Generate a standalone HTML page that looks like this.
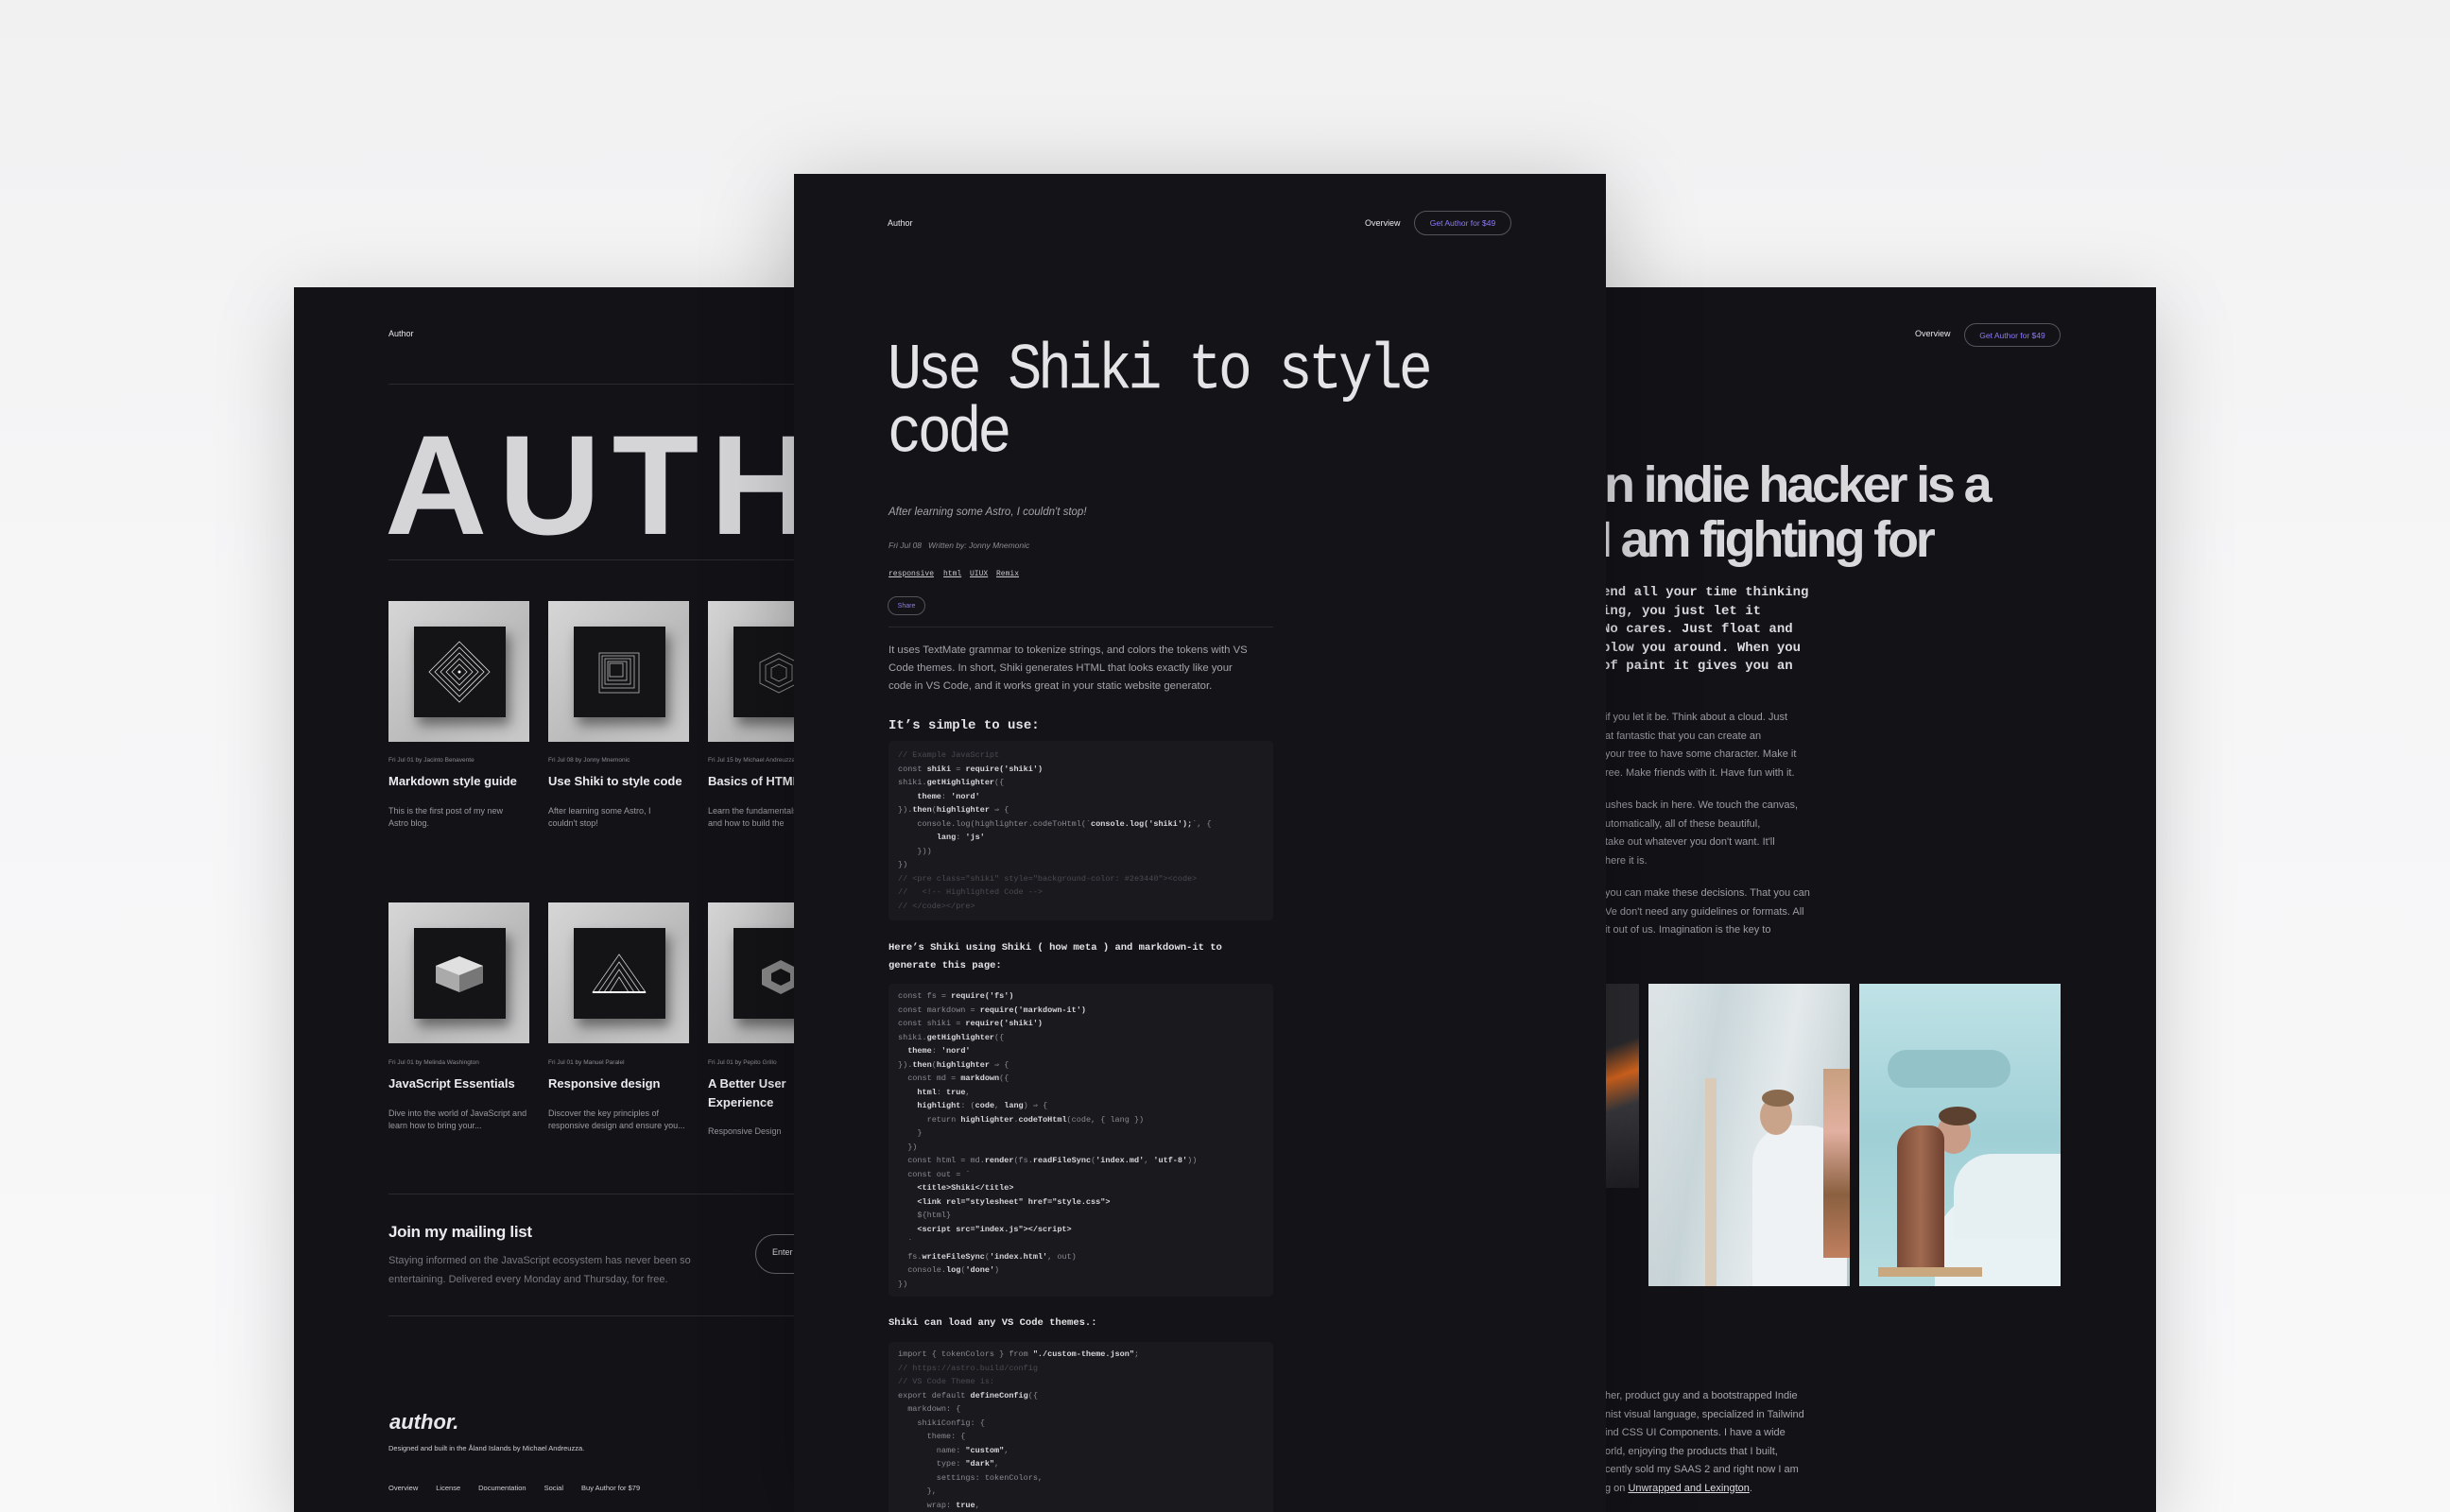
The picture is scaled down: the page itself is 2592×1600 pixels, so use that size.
<!DOCTYPE html>
<html><head><meta charset="utf-8">
<style>
*{margin:0;padding:0;box-sizing:border-box}
html,body{width:2592px;height:1600px;overflow:hidden}
body{background:linear-gradient(#f1f1f2,#f6f6f7 40%,#f8f8f9);font-family:"Liberation Sans",sans-serif;position:relative}
.p{position:absolute;background:#131217;overflow:hidden;box-shadow:0 20px 80px rgba(0,0,0,.18)}
.a{position:absolute;white-space:nowrap}
.mono{font-family:"Liberation Mono",monospace}
.pill{position:absolute;border:1.5px solid #55545c;border-radius:20px;color:#8b7cf6;display:flex;align-items:center;justify-content:center}
.hr{position:absolute;height:1px;background:#2a2930}
.code{position:absolute;background:#1a191e;border-radius:4px;font-family:"Liberation Mono",monospace;font-size:8.5px;line-height:14.5px;color:#8a8a92;padding:0 10px;white-space:pre}
.code b{color:#d8d8dc;font-weight:bold}
.code i{color:#4a4a52;font-style:normal}
.thumb{position:absolute;width:149px;height:149px;background:linear-gradient(135deg,#d6d6d7,#b9b9ba 60%,#c9c9ca)}
.thumb .in{position:absolute;left:27px;top:27px;width:97px;height:96px;background:#141316;box-shadow:4px 8px 12px rgba(0,0,0,.45)}
.meta{position:absolute;font-size:6.5px;color:#8a8a90;white-space:nowrap}
.tt{position:absolute;font-size:13px;font-weight:bold;color:#ececee;white-space:nowrap;line-height:20px}
.ds{position:absolute;font-size:9px;color:#9a9aa0;line-height:13px}
.gp{position:absolute;font-size:11px;color:#9c9ca3;line-height:19.5px;white-space:nowrap}
.img{position:absolute;overflow:hidden}
</style></head><body>

<!-- LEFT PANEL -->
<div class="p" style="left:311px;top:304px;width:560px;height:1296px">
 <div class="a" style="left:100px;top:44px;font-size:9px;color:#e8e8ea">Author</div>
 <div class="hr" style="left:100px;top:102px;width:500px"></div>
 <div class="a" style="left:96px;top:124px;font-size:150px;font-weight:bold;letter-spacing:12px;color:#d5d5d8;line-height:170px">AUTHOR</div>
 <div class="hr" style="left:100px;top:288px;width:500px"></div>

 <div class="thumb" style="left:100px;top:332px"><div class="in"><svg width="97" height="96" viewBox="0 0 97 96"><g fill="none" stroke="#ddd" stroke-width=".8"><path d="M48 16L80 48 48 80 16 48Z"/><path d="M48 22L74 48 48 74 22 48Z"/><path d="M48 28L68 48 48 68 28 48Z"/><path d="M48 34L62 48 48 62 34 48Z"/><path d="M48 40L56 48 48 56 40 48Z"/></g><circle cx="48" cy="48" r="1.5" fill="#fff"/></svg></div></div>
 <div class="thumb" style="left:269px;top:332px"><div class="in"><svg width="97" height="96" viewBox="0 0 97 96"><g fill="none" stroke="#bbb" stroke-width=".8"><rect x="27" y="28" width="42" height="42"/><rect x="30" y="31" width="34" height="34"/><rect x="33" y="34" width="27" height="27"/><rect x="36" y="37" width="20" height="20"/><rect x="38" y="39" width="14" height="14"/></g></svg></div></div>
 <div class="thumb" style="left:438px;top:332px"><div class="in"><svg width="97" height="96" viewBox="0 0 97 96"><g fill="none" stroke="#999" stroke-width=".8"><path d="M48 28L68 38 68 60 48 70 28 60 28 38Z"/><path d="M48 34L62 41 62 57 48 64 34 57 34 41Z"/><path d="M48 40L56 44 56 54 48 58 40 54 40 44Z"/></g></svg></div></div>

 <div class="meta" style="left:100px;top:497px">Fri Jul 01 by Jacinto Benavente</div>
 <div class="meta" style="left:269px;top:497px">Fri Jul 08 by Jonny Mnemonic</div>
 <div class="meta" style="left:438px;top:497px">Fri Jul 15 by Michael Andreuzza</div>
 <div class="tt" style="left:100px;top:513px">Markdown style guide</div>
 <div class="tt" style="left:269px;top:513px">Use Shiki to style code</div>
 <div class="tt" style="left:438px;top:513px">Basics of HTML</div>
 <div class="ds" style="left:100px;top:548px;width:140px">This is the first post of my new Astro blog.</div>
 <div class="ds" style="left:269px;top:548px;width:140px">After learning some Astro, I couldn't stop!</div>
 <div class="ds" style="left:438px;top:548px;width:150px;white-space:nowrap">Learn the fundamentals<br>and how to build the</div>

 <div class="thumb" style="left:100px;top:651px"><div class="in"><svg width="97" height="96" viewBox="0 0 97 96"><path d="M48 30L73 40 73 58 48 68 23 58 23 40Z" fill="#aaa"/><path d="M48 30L73 40 48 50 23 40Z" fill="#e0e0e0"/><path d="M48 50L73 40 73 58 48 68Z" fill="#777"/></svg></div></div>
 <div class="thumb" style="left:269px;top:651px"><div class="in"><svg width="97" height="96" viewBox="0 0 97 96"><g fill="none" stroke="#ccc" stroke-width=".8"><path d="M48 28L76 68 20 68Z"/><path d="M48 36L70 68 26 68Z"/><path d="M48 44L64 68 32 68Z"/><path d="M48 52L58 68 38 68Z"/></g><path d="M20 68L76 68" stroke="#fff" stroke-width="2"/></svg></div></div>
 <div class="thumb" style="left:438px;top:651px"><div class="in"><svg width="97" height="96" viewBox="0 0 97 96"><path d="M30 44L50 34 70 44 70 60 50 70 30 60Z" fill="#888"/><path d="M40 48L50 43 60 48 60 56 50 61 40 56Z" fill="#141316"/></svg></div></div>

 <div class="meta" style="left:100px;top:817px">Fri Jul 01 by Melinda Washington</div>
 <div class="meta" style="left:269px;top:817px">Fri Jul 01 by Manuel Paralel</div>
 <div class="meta" style="left:438px;top:817px">Fri Jul 01 by Pepito Grillo</div>
 <div class="tt" style="left:100px;top:833px">JavaScript Essentials</div>
 <div class="tt" style="left:269px;top:833px">Responsive design</div>
 <div class="tt" style="left:438px;top:833px">A Better User<br>Experience</div>
 <div class="ds" style="left:100px;top:868px;width:150px">Dive into the world of JavaScript and learn how to bring your...</div>
 <div class="ds" style="left:269px;top:868px;width:150px">Discover the key principles of responsive design and ensure you...</div>
 <div class="ds" style="left:438px;top:887px;white-space:nowrap">Responsive Design</div>

 <div class="hr" style="left:100px;top:959px;width:500px"></div>
 <div class="a" style="left:100px;top:990px;font-size:17px;font-weight:bold;color:#ececee;letter-spacing:-.3px">Join my mailing list</div>
 <div class="a" style="left:100px;top:1020px;font-size:11px;color:#78787f;line-height:20px">Staying informed on the JavaScript ecosystem has never been so<br>entertaining. Delivered every Monday and Thursday, for free.</div>
 <div class="a" style="left:488px;top:1002px;width:120px;height:42px;border:1.5px solid #66656c;border-radius:21px;font-size:9px;color:#ddd;padding:13px 0 0 17px">Enter</div>
 <div class="hr" style="left:100px;top:1088px;width:500px"></div>

 <div class="a" style="left:101px;top:1188px;font-size:22px;font-weight:bold;font-style:italic;color:#e8e8ea">author.</div>
 <div class="a" style="left:100px;top:1224px;font-size:7.5px;color:#d0d0d3">Designed and built in the Åland Islands by Michael Andreuzza.</div>
 <div class="a" style="left:100px;top:1266px;font-size:7.5px;color:#d0d0d3">Overview<span style="margin-left:19px">License</span><span style="margin-left:19px">Documentation</span><span style="margin-left:19px">Social</span><span style="margin-left:19px">Buy Author for $79</span></div>
</div>

<!-- RIGHT PANEL -->
<div class="p" style="left:1680px;top:304px;width:601px;height:1296px">
 <div class="a" style="left:346px;top:44px;font-size:9px;color:#e8e8ea">Overview</div>
 <div class="pill" style="left:398px;top:38px;width:102px;height:25px;font-size:8.5px">Get Author for $49</div>
 <div class="a" style="left:17px;top:180px;font-size:54px;font-weight:bold;color:#d9d9dc;letter-spacing:-3.2px;line-height:58px">n indie hacker is a</div>
 <div class="a" style="left:11px;top:238px;font-size:54px;font-weight:bold;color:#d9d9dc;letter-spacing:-3.2px;line-height:58px">I am fighting for</div>
 <div class="a mono" style="left:15px;top:314px;font-size:14px;font-weight:bold;color:#dcdcdf;line-height:19.5px">end all your time thinking<br>ing, you just let it<br>No cares. Just float and<br> blow you around. When you<br>of paint it gives you an</div>
 <div class="gp" style="left:18px;top:446px">if you let it be. Think about a cloud. Just<br>at fantastic that you can create an<br> your tree to have some character. Make it<br>ree. Make friends with it. Have fun with it.</div>
 <div class="gp" style="left:18px;top:539px">ushes back in here. We touch the canvas,<br>utomatically, all of these beautiful,<br>take out whatever you don't want. It'll<br>here it is.</div>
 <div class="gp" style="left:18px;top:632px">you can make these decisions. That you can<br>Ve don't need any guidelines or formats. All<br>it out of us. Imagination is the key to</div>
 <div class="img" style="left:19px;top:737px;width:35px;height:216px;background:linear-gradient(160deg,#2a2a2e 30%,#d8661e 45%,#3a3a3e 60%,#1e1e22)"></div>
 <div class="img" style="left:64px;top:737px;width:213px;height:320px;background:linear-gradient(100deg,#e8eef0,#c9d6da 30%,#e4eaec 60%,#b8c6ca)">
  <div class="a" style="left:110px;top:150px;width:100px;height:170px;border-radius:40px 40px 0 0;background:#eef2f4"></div>
  <div class="a" style="left:118px;top:120px;width:34px;height:40px;border-radius:50%;background:#c9a38a"></div>
  <div class="a" style="left:120px;top:112px;width:34px;height:18px;border-radius:50%;background:#8a6a4e"></div>
  <div class="a" style="left:60px;top:100px;width:12px;height:220px;background:#d9cbb8"></div>
  <div class="a" style="left:185px;top:90px;width:28px;height:200px;background:linear-gradient(#c8a080,#e2b0a0,#8a6040,#c08060)"></div>
 </div>
 <div class="img" style="left:287px;top:737px;width:213px;height:320px;background:linear-gradient(#bfe2e6,#9fd0d6 50%,#b8dde0)">
  <div class="a" style="left:30px;top:70px;width:130px;height:40px;border-radius:30px;background:#93c2c8"></div>
  <div class="a" style="left:80px;top:220px;width:150px;height:100px;border-radius:60px 0 0 0;background:#e8f2f4"></div>
  <div class="a" style="left:100px;top:180px;width:150px;height:90px;border-radius:40px 0 0 0;background:#e6f0f2"></div>
  <div class="a" style="left:82px;top:138px;width:36px;height:42px;border-radius:50%;background:#c89c86"></div>
  <div class="a" style="left:84px;top:130px;width:40px;height:20px;border-radius:50%;background:#5c4030"></div>
  <div class="a" style="left:40px;top:150px;width:50px;height:155px;border-radius:25px 15px 0 0;background:linear-gradient(90deg,#7a4a36,#a06a50,#6e4030)"></div>
  <div class="a" style="left:20px;top:300px;width:110px;height:10px;background:#c9a880"></div>
 </div>
 <div class="gp" style="left:18px;top:1164px;color:#a5a5ab">her, product guy and a bootstrapped Indie<br>nist visual language, specialized in Tailwind<br>ind CSS UI Components. I have a wide<br>orld, enjoying the products that I built,<br>cently sold my SAAS 2 and right now I am<br>g on <u style="color:#e0e0e3">Unwrapped and Lexington</u>.</div>
</div>

<!-- MIDDLE PANEL -->
<div class="p" style="left:840px;top:184px;width:859px;height:1416px;background:#141317;box-shadow:0 20px 90px rgba(0,0,0,.25)">
 <div class="a" style="left:99px;top:47px;font-size:9px;color:#e8e8ea">Author</div>
 <div class="a" style="left:604px;top:47px;font-size:9px;color:#e8e8ea">Overview</div>
 <div class="pill" style="left:656px;top:39px;width:103px;height:26px;font-size:8.5px">Get Author for $49</div>
 <div class="a mono" style="left:99px;top:176px;font-size:60px;color:#e4e4e6;letter-spacing:-4.2px;line-height:58px;transform:scaleY(1.15);transform-origin:0 0">Use Shiki to style<br>code</div>
 <div class="a" style="left:100px;top:352px;font-size:11.5px;font-style:italic;color:#a4a4aa">After learning some Astro, I couldn't stop!</div>
 <div class="a" style="left:100px;top:388px;font-size:8.5px;font-style:italic;color:#8a8a90">Fri Jul 08&nbsp;&nbsp;&nbsp;Written by: Jonny Mnemonic</div>
 <div class="a mono" style="left:100px;top:419px;font-size:8px;color:#c8c8cc;text-decoration:underline">responsive</div>
 <div class="a mono" style="left:158px;top:419px;font-size:8px;color:#c8c8cc;text-decoration:underline">html</div>
 <div class="a mono" style="left:186px;top:419px;font-size:8px;color:#c8c8cc;text-decoration:underline">UIUX</div>
 <div class="a mono" style="left:214px;top:419px;font-size:8px;color:#c8c8cc;text-decoration:underline">Remix</div>
 <div class="pill" style="left:99px;top:447px;width:40px;height:20px;font-size:7px">Share</div>
 <div class="hr" style="left:100px;top:479px;width:407px"></div>
 <div class="a" style="left:100px;top:495px;font-size:11.3px;color:#a4a4aa;line-height:19px">It uses TextMate grammar to tokenize strings, and colors the tokens with VS<br>Code themes. In short, Shiki generates HTML that looks exactly like your<br>code in VS Code, and it works great in your static website generator.</div>
 <div class="a mono" style="left:100px;top:576px;font-size:14px;font-weight:bold;color:#e4e4e6">It’s simple to use:</div>
 <div class="code" style="left:100px;top:600px;width:407px;height:190px;padding-top:8px"><i>// Example JavaScript</i>
const <b>shiki</b> = <b>require('shiki')</b>
shiki.<b>getHighlighter</b>({
    <b>theme</b>: <b>'nord'</b>
}).<b>then</b>(<b>highlighter</b> ⇒ {
    console.log(highlighter.codeToHtml(`<b>console.log('shiki');</b>`, {
        <b>lang</b>: <b>'js'</b>
    }))
})
<i>// &lt;pre class="shiki" style="background-color: #2e3440"&gt;&lt;code&gt;</i>
<i>//   &lt;!-- Highlighted Code --&gt;</i>
<i>// &lt;/code&gt;&lt;/pre&gt;</i></div>
 <div class="a mono" style="left:100px;top:810px;font-size:10.5px;font-weight:bold;color:#e4e4e6;line-height:19px">Here’s Shiki using Shiki ( how meta ) and markdown-it to<br>generate this page:</div>
 <div class="code" style="left:100px;top:857px;width:407px;height:331px;padding-top:6px">const fs = <b>require('fs')</b>
const markdown = <b>require('markdown-it')</b>
const shiki = <b>require('shiki')</b>
shiki.<b>getHighlighter</b>({
  <b>theme</b>: <b>'nord'</b>
}).<b>then</b>(<b>highlighter</b> ⇒ {
  const md = <b>markdown</b>({
    <b>html</b>: <b>true</b>,
    <b>highlight</b>: (<b>code</b>, <b>lang</b>) ⇒ {
      return <b>highlighter</b>.<b>codeToHtml</b>(code, { lang })
    }
  })
  const html = md.<b>render</b>(fs.<b>readFileSync</b>(<b>'index.md'</b>, <b>'utf-8'</b>))
  const out = `
    <b>&lt;title&gt;Shiki&lt;/title&gt;</b>
    <b>&lt;link rel="stylesheet" href="style.css"&gt;</b>
    ${html}
    <b>&lt;script src="index.js"&gt;&lt;/script&gt;</b>
  `
  fs.<b>writeFileSync</b>(<b>'index.html'</b>, out)
  console.<b>log</b>(<b>'done'</b>)
})</div>
 <div class="a mono" style="left:100px;top:1210px;font-size:10.5px;font-weight:bold;color:#e4e4e6">Shiki can load any VS Code themes.:</div>
 <div class="code" style="left:100px;top:1236px;width:407px;height:200px;padding-top:6px">import { tokenColors } from <b>"./custom-theme.json"</b>;
<i>// https://astro.build/config</i>
<i>// VS Code Theme is:</i>
export default <b>defineConfig</b>({
  markdown: {
    shikiConfig: {
      theme: {
        name: <b>"custom"</b>,
        type: <b>"dark"</b>,
        settings: tokenColors,
      },
      wrap: <b>true</b>,</div>
</div>
</body></html>
